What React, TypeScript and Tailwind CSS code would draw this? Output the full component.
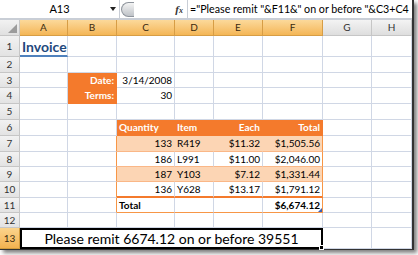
import React from 'react';
import { twMerge } from 'tailwind-merge';

const Cell = ({ className, children }: { className?: string; children?: React.ReactNode }) => (
    <div className={twMerge('flex items-center overflow-visible whitespace-nowrap border-r border-b border-[#d0d7e5] px-[2px] text-[10px] text-black', className)}>
        {children}
    </div>
);

const RowHead = ({ n, active }: { n: number; active?: boolean }) => (
    <div
        className={
            active
                ? 'flex items-center justify-center border-r border-b border-[#d19a3c] bg-gradient-to-b from-[#fbd48c] to-[#f3b24f] text-[10px] text-[#3a2a10]'
                : 'flex items-center justify-center border-r border-b border-[#c6c6c6] bg-gradient-to-b from-[#f2f2f2] to-[#e3e3e3] text-[10px] text-[#333]'
        }
    >
        {n}
    </div>
);

const ColHead = ({ label, active }: { label: string; active?: boolean }) => (
    <div
        className={
            active
                ? 'flex items-center justify-center border-r border-b border-[#d79d45] bg-gradient-to-b from-[#fcd99a] to-[#f4b655] text-[10px] text-[#3a2a10]'
                : 'flex items-center justify-center border-r border-b border-[#c6c6c6] bg-gradient-to-b from-[#f3f3f3] to-[#dedede] text-[10px] text-[#333]'
        }
    >
        {label}
    </div>
);

const peach = 'bg-[#fcd5b4] border-[#fcd5b4] border-b-[#fab787]';
const plain = 'border-b-[#fab787]';

type Line = { q: string; item: string; each: string; total: string };
const lines: Line[] = [
    { q: '133', item: 'R419', each: '$11.32', total: '$1,505.56' },
    { q: '186', item: 'L991', each: '$11.00', total: '$2,046.00' },
    { q: '187', item: 'Y103', each: '$7.12', total: '$1,331.44' },
    { q: '136', item: 'Y628', each: '$13.17', total: '$1,791.12' },
];

export default function App() {
    return (
        <div className="h-[255px] w-[418px] overflow-hidden bg-white" style={{ fontFamily: 'Lato, "Open Sans", sans-serif' }}>
            <div className="w-[414px] border-r-2 border-b border-[#333] shadow-[3px_3px_4px_rgba(0,0,0,0.5)]">
                {/* formula bar */}
                <div className="flex h-[20px] items-stretch border-b-2 border-[#c9ced6] bg-white">
                    <div className="relative flex w-[120px] items-center justify-center border-r border-[#c9ced6] text-[11px] text-black">
                        A13
                        <span className="absolute right-[3px] top-[7px] h-0 w-0 border-x-[3px] border-t-[4px] border-x-transparent border-t-[#222]" />
                    </div>
                    <div className="flex w-[67px] items-center">
                        <div className="ml-[1px] h-[15px] w-[13px] rounded-l-full border border-r-0 border-[#8f959d] bg-gradient-to-b from-[#f4f4f4] to-[#bfc3c8]" />
                        <span className="ml-auto mr-[4px] text-[11px] font-bold italic text-[#333]" style={{ fontFamily: '"Liberation Serif", serif' }}>
                            f<span className="text-[8px]">x</span>
                        </span>
                    </div>
                    <div className="flex flex-1 items-center whitespace-nowrap border-l border-[#c9ced6] pl-[2px] text-[10.7px] text-black">
                        ="Please remit "&amp;F11&amp;" on or before "&amp;C3+C4
                    </div>
                </div>

                {/* sheet */}
                <div className="grid grid-cols-[20px_48px_49px_58px_39px_49px_60px_49px_40px] grid-rows-[16px_21px_16px_15px_16px_16px_16px_16px_15px_15px_16px_15px_15px_21px]">
                    <div className="relative border-r border-b border-[#c6c6c6] bg-gradient-to-b from-[#f2f2f2] to-[#e0e0e0]">
                        <span className="absolute bottom-[2px] right-[2px] h-0 w-0" style={{ borderBottom: '9px solid #9c9c9c', borderLeft: '9px solid transparent' }} />
                    </div>
                    {['A', 'B', 'C', 'D', 'E', 'F'].map((c) => (
                        <ColHead key={c} label={c} active />
                    ))}
                    <ColHead label="G" />
                    <ColHead label="H" />

                    {/* row 1 */}
                    <RowHead n={1} />
                    <Cell className="border-b-2 border-b-[#4f81bd] pt-[2px] text-[14px] font-bold text-[#1f497d]">Invoice</Cell>
                    <Cell /><Cell /><Cell /><Cell /><Cell /><Cell /><Cell />

                    {/* row 2 */}
                    <RowHead n={2} />
                    <Cell /><Cell /><Cell /><Cell /><Cell /><Cell /><Cell /><Cell />

                    {/* row 3 */}
                    <RowHead n={3} />
                    <Cell />
                    <Cell className="justify-end border-[#f47a2c] bg-[#f47a2c] font-bold text-white">Date:</Cell>
                    <Cell className="justify-end">3/14/2008</Cell>
                    <Cell /><Cell /><Cell /><Cell /><Cell />

                    {/* row 4 */}
                    <RowHead n={4} />
                    <Cell />
                    <Cell className="justify-end border-[#f47a2c] bg-[#f47a2c] font-bold text-white">Terms:</Cell>
                    <Cell className="justify-end">30</Cell>
                    <Cell /><Cell /><Cell /><Cell /><Cell />

                    {/* row 5 */}
                    <RowHead n={5} />
                    <Cell /><Cell /><Cell /><Cell /><Cell /><Cell /><Cell /><Cell />

                    {/* row 6 - table header */}
                    <RowHead n={6} />
                    <Cell /><Cell />
                    <Cell className="border-[#f47a2c] bg-[#f47a2c] font-bold text-white">Quantity</Cell>
                    <Cell className="border-[#f47a2c] bg-[#f47a2c] font-bold text-white">Item</Cell>
                    <Cell className="justify-end border-[#f47a2c] bg-[#f47a2c] font-bold text-white">Each</Cell>
                    <Cell className="justify-end border-[#f47a2c] bg-[#f47a2c] font-bold text-white">Total</Cell>
                    <Cell /><Cell />

                    {/* rows 7-10 */}
                    {lines.map((l, i) => {
                        const band = i % 2 === 0 ? peach : plain;
                        const last = i === lines.length - 1 ? 'border-b-2 border-b-[#f47a2c]' : '';
                        return (
                            <React.Fragment key={l.q + l.item}>
                                <RowHead n={7 + i} />
                                <Cell /><Cell className="border-r-[#f79646]" />
                                <Cell className={twMerge('justify-end', band, last)}>{l.q}</Cell>
                                <Cell className={twMerge(band, last)}>{l.item}</Cell>
                                <Cell className={twMerge('justify-end', band, last)}>{l.each}</Cell>
                                <Cell className={twMerge('justify-end', band, 'border-r-[#f79646]', last)}>{l.total}</Cell>
                                <Cell /><Cell />
                            </React.Fragment>
                        );
                    })}

                    {/* row 11 - totals */}
                    <RowHead n={11} />
                    <Cell /><Cell className="border-r-[#f79646]" />
                    <Cell className="border-b-[#f79646] font-bold">Total</Cell>
                    <Cell className="border-b-[#f79646]" />
                    <Cell className="border-b-[#f79646]" />
                    <Cell className="relative justify-end border-b-[#f79646] border-r-[#f79646] font-bold">
                        $6,674.12
                        <span className="absolute bottom-0 right-0 h-0 w-0 border-b-[4px] border-l-[4px] border-b-[#3b5fb5] border-l-transparent" />
                    </Cell>
                    <Cell /><Cell />

                    {/* row 12 */}
                    <RowHead n={12} />
                    <Cell /><Cell /><Cell /><Cell /><Cell /><Cell /><Cell /><Cell />

                    {/* row 13 - merged message */}
                    <RowHead n={13} active />
                    <div className="relative col-span-6 flex items-center justify-center border-2 border-black text-[14px] text-black">
                        Please remit 6674.12 on or before 39551
                        <span className="absolute -bottom-[3px] -right-[3px] h-[5px] w-[5px] border border-white bg-black" />
                    </div>
                    <Cell /><Cell />
                </div>
            </div>
        </div>
    );
}
